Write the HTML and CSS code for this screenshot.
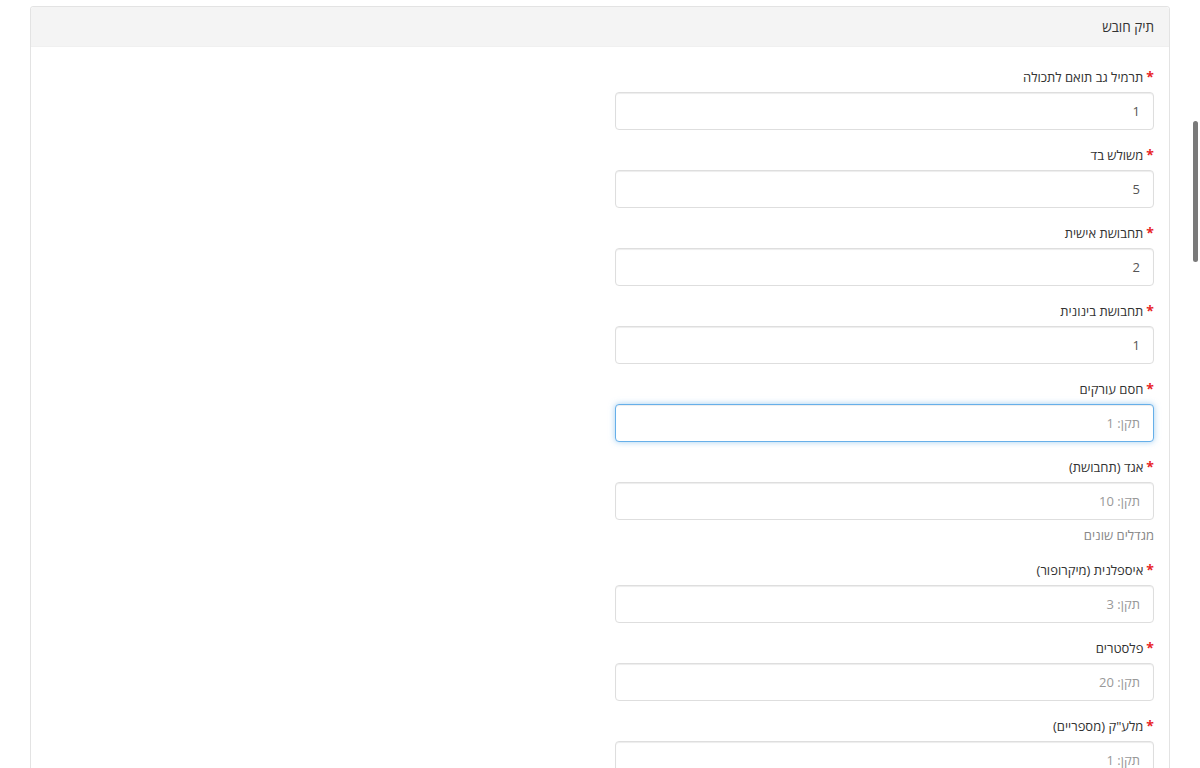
FILE: index.html
```html
<!DOCTYPE html>
<html lang="he" dir="rtl">
<head>
    <meta charset="UTF-8">
    <meta name="viewport" content="width=device-width, initial-scale=1.0">
    <title>תיק חובש</title>
    <link rel="stylesheet" href="styles.css">
</head>
<body>
    <div class="container">
        <div class="panel">
            <div class="panel-heading">תיק חובש</div>
            <div class="panel-body">
                <div class="row">
                    <div class="col-half">
                        <div class="form-group">
                            <label><span class="req">*</span>תרמיל גב תואם לתכולה</label>
                            <input type="text" class="form-control" value="1">
                        </div>
                        <div class="form-group">
                            <label><span class="req">*</span>משולש בד</label>
                            <input type="text" class="form-control" value="5">
                        </div>
                        <div class="form-group">
                            <label><span class="req">*</span>תחבושת אישית</label>
                            <input type="text" class="form-control" value="2">
                        </div>
                        <div class="form-group">
                            <label><span class="req">*</span>תחבושת בינונית</label>
                            <input type="text" class="form-control" value="1">
                        </div>
                        <div class="form-group">
                            <label><span class="req">*</span>חסם עורקים</label>
                            <input type="text" class="form-control is-focused" placeholder="תקן: 1">
                        </div>
                        <div class="form-group">
                            <label><span class="req">*</span>אגד (תחבושת)</label>
                            <input type="text" class="form-control" placeholder="תקן: 10">
                            <p class="help-block">מגדלים שונים</p>
                        </div>
                        <div class="form-group">
                            <label><span class="req">*</span>איספלנית (מיקרופור)</label>
                            <input type="text" class="form-control" placeholder="תקן: 3">
                        </div>
                        <div class="form-group">
                            <label><span class="req">*</span>פלסטרים</label>
                            <input type="text" class="form-control" placeholder="תקן: 20">
                        </div>
                        <div class="form-group">
                            <label><span class="req">*</span>מלע"ק (מספריים)</label>
                            <input type="text" class="form-control" placeholder="תקן: 1">
                        </div>
                        <div class="form-group">
                            <label><span class="req">*</span>כפפות</label>
                            <input type="text" class="form-control" placeholder="תקן: 4">
                        </div>
                    </div>
                </div>
            </div>
        </div>
    </div>
    <div class="scroll-thumb"></div>
</body>
</html>
```

FILE: styles.css
```css
html, body {
    height: 100%;
}
body {
    margin: 0;
    overflow: hidden;
    font-family: "Open Sans", "Liberation Sans", sans-serif;
    font-size: 13px;
    line-height: 20px;
    color: #333;
    background: #fff;
}
.container {
    width: 1140px;
    margin: 0 auto;
    padding: 6px 15px 0;
}
.panel {
    border: 1px solid #e3e3e3;
    border-radius: 3px;
    background: #fff;
}
.panel-heading {
    background: #f4f4f4;
    padding: 10px 15px 9px;
    font-size: 13.5px;
    border-bottom: 1px solid #f0f0f0;
    border-radius: 3px 3px 0 0;
}
.panel-body {
    padding: 20px 15px;
}
.row {
    display: flex;
    margin: 0 -15px;
}
.col-half {
    width: 50%;
    padding: 0 15px;
    box-sizing: border-box;
}
.form-group {
    margin-bottom: 15px;
}
label {
    display: block;
    margin-bottom: 5px;
    font-weight: normal;
}
.req {
    color: #e8262a;
    font-weight: bold;
    font-size: 14px;
    margin-left: 3px;
}
.form-control {
    display: block;
    width: 100%;
    height: 38px;
    box-sizing: border-box;
    padding: 6px 13px;
    font-family: inherit;
    font-size: 13px;
    color: #555;
    background: #fff;
    border: 1px solid #dedede;
    border-radius: 4px;
    box-shadow: inset 0 1px 1px rgba(0, 0, 0, 0.075);
    outline: none;
    direction: rtl;
}
.form-control::placeholder {
    color: #999;
}
.form-control.is-focused {
    border-color: #66afe9;
    box-shadow: inset 0 1px 1px rgba(0, 0, 0, 0.075), 0 0 6px rgba(102, 175, 233, 0.6);
}
.help-block {
    margin: 5px 0 0;
    color: #888;
}
.scroll-thumb {
    position: fixed;
    top: 121px;
    right: 2px;
    width: 5px;
    height: 141px;
    border-radius: 3px;
    background: #7a7a7a;
}
```
